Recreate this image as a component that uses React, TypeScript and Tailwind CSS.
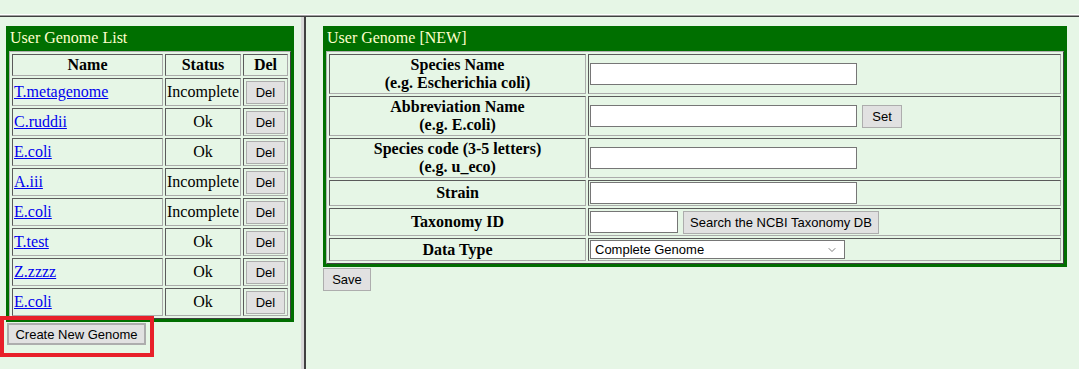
import { ChevronDown } from 'lucide-react';

const genomes = [
  { name: 'T.metagenome', status: 'Incomplete' },
  { name: 'C.ruddii', status: 'Ok' },
  { name: 'E.coli', status: 'Ok' },
  { name: 'A.iii', status: 'Incomplete' },
  { name: 'E.coli', status: 'Incomplete' },
  { name: 'T.test', status: 'Ok' },
  { name: 'Z.zzzz', status: 'Ok' },
  { name: 'E.coli', status: 'Ok' },
];

// inset cell border, like an old table border=1
const cell =
  'border border-t-[#5a5a5a] border-l-[#5a5a5a] border-b-[#ababab] border-r-[#ababab] p-[1px] align-middle';
const btn =
  "bg-[#e1e1e1] border border-[#adadad] text-[13px] text-black font-['Liberation_Sans',Arial,sans-serif] leading-none";

function GenomeList() {
  return (
    <div className="w-[288px] bg-[#006f00] px-[3px] pb-[3px]">
      <div className="h-[25px] pl-[1px] pt-[2px] text-[16px] leading-[20px] text-[#ffffcc]">User Genome List</div>
      <table className="border-separate border-spacing-[2px] border border-t-[#b0b0b0] border-l-[#b0b0b0] border-b-[#404040] border-r-[#404040] bg-[#e6f6e6] w-[282px] table-fixed">
        <colgroup>
          <col className="w-[151px]" />
          <col className="w-[76px]" />
          <col className="w-[45px]" />
        </colgroup>
        <thead>
          <tr className="h-[22px]">
            <th className={cell}>Name</th>
            <th className={cell}>Status</th>
            <th className={cell}>Del</th>
          </tr>
        </thead>
        <tbody>
          {genomes.map((g, i) => (
            <tr key={i} className="h-[28px]">
              <td className={cell}>
                <a href="#" className="text-[#0000ee] underline">{g.name}</a>
              </td>
              <td className={`${cell} text-center whitespace-nowrap`}>{g.status}</td>
              <td className={`${cell} text-center`}>
                <button className={`${btn} w-[39px] h-[23px] mx-auto block`}>Del</button>
              </td>
            </tr>
          ))}
        </tbody>
      </table>
    </div>
  );
}

function NewGenome() {
  const input = 'bg-white border border-[#767676] h-[22px] block';
  return (
    <div className="w-[744px] bg-[#006f00] px-[3px] pb-[3px]">
      <div className="h-[25px] pl-[1px] pt-[2px] text-[16px] leading-[20px] text-[#ffffcc]">User Genome [NEW]</div>
      <table className="border-separate border-spacing-[2px] border border-t-[#b0b0b0] border-l-[#b0b0b0] border-b-[#404040] border-r-[#404040] bg-[#e6f6e6] w-[738px] table-fixed">
        <colgroup>
          <col className="w-[257px]" />
          <col className="w-[473px]" />
        </colgroup>
        <tbody className="font-bold">
          <tr className="h-[40px]">
            <td className={`${cell} text-center`}>Species Name<br />(e.g. Escherichia coli)</td>
            <td className={cell}><input className={`${input} w-[267px]`} /></td>
          </tr>
          <tr className="h-[40px]">
            <td className={`${cell} text-center`}>Abbreviation Name<br />(e.g. E.coli)</td>
            <td className={cell}>
              <div className="flex items-center gap-[5px]">
                <input className={`${input} w-[267px]`} />
                <button className={`${btn} font-normal w-[40px] h-[23px]`}>Set</button>
              </div>
            </td>
          </tr>
          <tr className="h-[40px]">
            <td className={`${cell} text-center`}>Species code (3-5 letters)<br />(e.g. u_eco)</td>
            <td className={cell}><input className={`${input} w-[267px]`} /></td>
          </tr>
          <tr className="h-[26px]">
            <td className={`${cell} text-center`}>Strain</td>
            <td className={cell}><input className={`${input} w-[267px]`} /></td>
          </tr>
          <tr className="h-[28px]">
            <td className={`${cell} text-center`}>Taxonomy ID</td>
            <td className={cell}>
              <div className="flex items-center gap-[5px]">
                <input className={`${input} w-[88px]`} />
                <button className={`${btn} font-normal w-[196px] h-[23px]`}>Search the NCBI Taxonomy DB</button>
              </div>
            </td>
          </tr>
          <tr className="h-[22px]">
            <td className={`${cell} text-center`}>Data Type</td>
            <td className={cell}>
              <div className="w-[255px] h-[19px] bg-white border border-[#767676] flex items-center justify-between pl-[4px] pr-[6px] font-normal font-['Liberation_Sans',Arial,sans-serif] text-[13px] leading-none">
                <span>Complete Genome</span>
                <ChevronDown className="w-[12px] h-[12px] text-[#555]" strokeWidth={1.5} />
              </div>
            </td>
          </tr>
        </tbody>
      </table>
    </div>
  );
}

export default function App() {
  return (
    <div className="relative w-[1079px] h-[369px] overflow-hidden bg-[#e6f6e6] text-black font-['Liberation_Serif','Times_New_Roman',serif] text-[16px] leading-[18px]">
      {/* top frame */}
      <div className="h-[14px]" />
      <div className="h-[1px] bg-white" />
      <div className="h-[1px] bg-[#a0a0a0]" />
      <div className="h-[1px] bg-[#404040]" />
      <div className="flex h-[352px]">
        {/* left frame */}
        <div className="w-[301px] pl-[6px] pt-[9px]">
          <GenomeList />
          <button className={`${btn} mt-[1px] ml-[1px] w-[139px] h-[22px] border-2 border-[#0078d7]`}>Create New Genome</button>
        </div>
        <div className="w-[3px] bg-[#d8d8d8]" />
        <div className="w-[2px] bg-[#404040]" />
        {/* right frame */}
        <div className="flex-1 pl-[17px] pt-[9px]">
          <NewGenome />
          <button className={`${btn} mt-[1px] w-[48px] h-[23px]`}>Save</button>
        </div>
      </div>
      {/* red highlight annotation */}
      <div className="absolute left-0 top-[316px] w-[154px] h-[41px] border-4 border-[#e8202a]" />
    </div>
  );
}
